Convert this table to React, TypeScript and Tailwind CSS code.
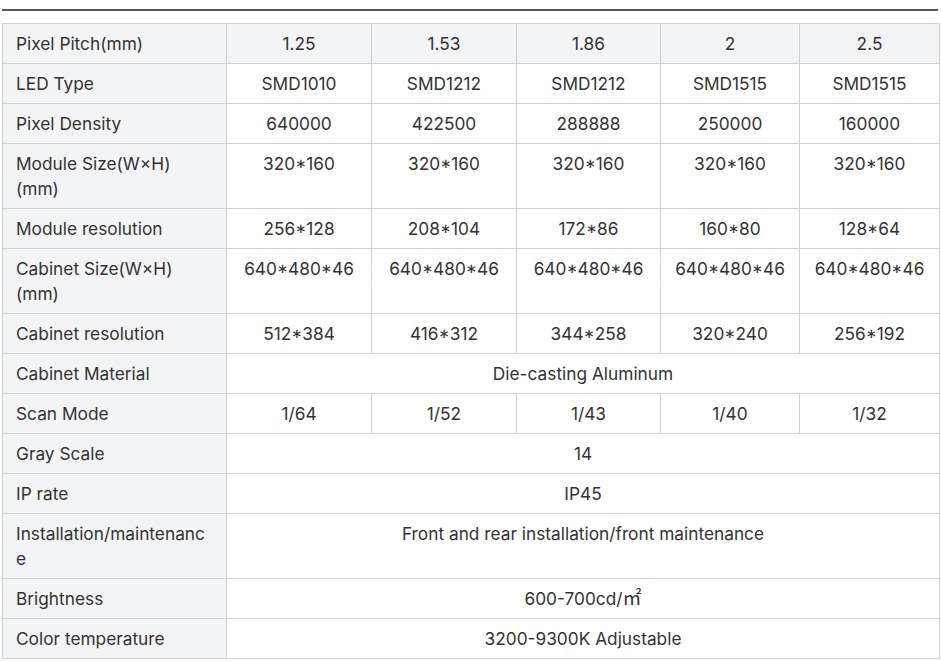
import type { ReactNode } from 'react';

const cols = [224, 145, 145, 144, 139, 140];

type Row = { label: string; values: ReactNode[] };

const rows: Row[] = [
  { label: 'LED Type', values: ['SMD1010', 'SMD1212', 'SMD1212', 'SMD1515', 'SMD1515'] },
  { label: 'Pixel Density', values: ['640000', '422500', '288888', '250000', '160000'] },
  { label: 'Module Size(W×H)(mm)', values: ['320*160', '320*160', '320*160', '320*160', '320*160'] },
  { label: 'Module resolution', values: ['256*128', '208*104', '172*86', '160*80', '128*64'] },
  { label: 'Cabinet Size(W×H)(mm)', values: ['640*480*46', '640*480*46', '640*480*46', '640*480*46', '640*480*46'] },
  { label: 'Cabinet resolution', values: ['512*384', '416*312', '344*258', '320*240', '256*192'] },
  { label: 'Cabinet Material', values: ['Die-casting Aluminum'] },
  { label: 'Scan Mode', values: ['1/64', '1/52', '1/43', '1/40', '1/32'] },
  { label: 'Gray Scale', values: ['14'] },
  { label: 'IP rate', values: ['IP45'] },
  { label: 'Installation/maintenance', values: ['Front and rear installation/front maintenance'] },
  {
    label: 'Brightness',
    values: [
      <>
        600-700cd/<span className="text-[19px] leading-none">㎡</span>
      </>,
    ],
  },
  { label: 'Color temperature', values: ['3200-9300K Adjustable'] },
];

const cell = 'border border-[#cfd1d4] px-[13px] py-[7px] align-top break-words';

export default function App() {
  return (
    <div
      className="min-h-[661px] bg-white pl-[2px] pt-[9px] text-[17.3px] leading-[25px] text-[#333333]"
      style={{ fontFamily: 'Inter, "Noto Sans", "Noto Sans CJK SC", sans-serif' }}
    >
      <div className="w-[936px] h-[2px] bg-[#4b5a72]" />
      <table className="mt-[12px] w-[937px] table-fixed border-collapse">
        <colgroup>
          {cols.map((w, i) => (
            <col key={i} style={{ width: w }} />
          ))}
        </colgroup>
        <tbody>
          <tr className="bg-[#f3f4f6]">
            <td className={cell}>Pixel Pitch(mm)</td>
            {['1.25', '1.53', '1.86', '2', '2.5'].map((v) => (
              <td key={v} className={`${cell} text-center`}>
                {v}
              </td>
            ))}
          </tr>
          {rows.map((r) => (
            <tr key={r.label}>
              <td className={`${cell} bg-[#f3f4f6]`}>{r.label}</td>
              {r.values.length === 1 ? (
                <td colSpan={5} className={`${cell} text-center`}>
                  {r.values[0]}
                </td>
              ) : (
                r.values.map((v, i) => (
                  <td key={i} className={`${cell} text-center`}>
                    {v}
                  </td>
                ))
              )}
            </tr>
          ))}
        </tbody>
      </table>
    </div>
  );
}
